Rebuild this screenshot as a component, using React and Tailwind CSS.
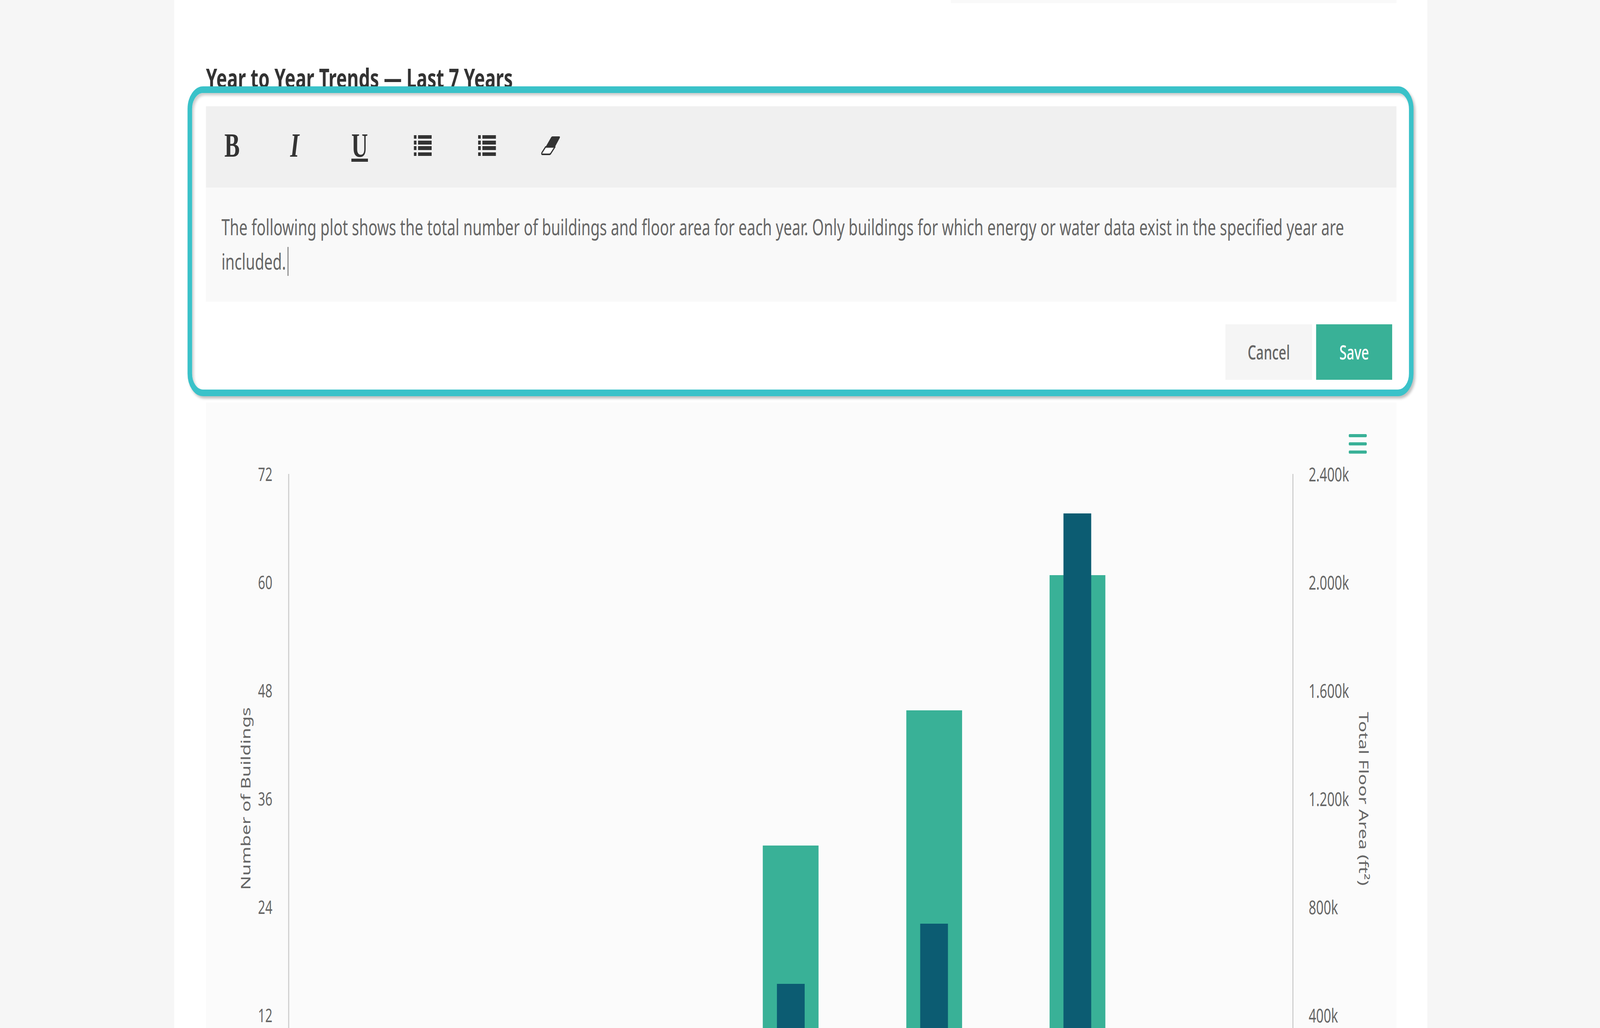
const leftTicks = ["72", "60", "48", "36", "24", "12"];
const rightTicks = ["2.400k", "2.000k", "1.600k", "1.200k", "800k", "400k"];

function ListIcon() {
  return (
    <svg width="67" height="53" viewBox="0 0 67 53" fill="#333333">
      <rect x="0" y="0" width="10" height="9" />
      <rect x="16" y="0" width="51" height="9" />
      <rect x="0" y="14" width="10" height="10" />
      <rect x="16" y="14" width="51" height="10" />
      <rect x="0" y="28" width="10" height="10" />
      <rect x="16" y="28" width="51" height="10" />
      <rect x="0" y="44" width="10" height="9" />
      <rect x="16" y="44" width="51" height="9" />
    </svg>
  );
}

function EraserIcon() {
  return (
    <svg width="72" height="49" viewBox="0 0 72 49">
      <path d="M17 28 L38 3 Q40 1 43 1 H68 Q72 1 70 5 L52 28 Z" fill="#333333" />
      <path
        d="M17 28 H52 L36 45 Q34 47 31 47 H5 Q1 47 3 43 Z"
        fill="#ffffff"
        stroke="#333333"
        strokeWidth="4"
        strokeLinejoin="round"
      />
    </svg>
  );
}

function HamburgerIcon() {
  return (
    <svg width="68" height="50" viewBox="0 0 68 50" fill="#39b197">
      <rect x="0" y="0" width="68" height="8" rx="4" />
      <rect x="0" y="21" width="68" height="8" rx="4" />
      <rect x="0" y="42" width="68" height="8" rx="4" />
    </svg>
  );
}

function BarGroup({ green, dark }) {
  return (
    <div className="grid items-end justify-center">
      <div className="w-[209px] justify-self-center bg-[#39b197] [grid-area:1/1]" style={{ height: green }}></div>
      <div className="w-[104px] justify-self-center bg-[#0c5c72] [grid-area:1/1]" style={{ height: dark }}></div>
    </div>
  );
}

function App() {
  // the window can come up narrower than the 5997 design width
  const fit = window.innerWidth / 5997;

  return (
    <div className="h-[2631px] overflow-hidden bg-[#f6f6f6]">
      <div
        className="h-[2631px] w-[5997px] origin-top-left pl-[653px] font-['Noto_Sans',sans-serif]"
        style={{ transform: `scaleX(${fit})` }}
      >
        <div className="relative h-[2631px] w-[4697px] overflow-hidden bg-white pl-[119px] pr-[116px]">
          <div className="ml-auto h-[8px] w-[1670px] bg-[#f9f9f9]"></div>

          <h2 className="mt-[146px] whitespace-nowrap text-[67.5px] leading-[90px] font-bold text-[#333333]">
            Year to Year Trends — Last 7 Years
          </h2>

          <div className="mt-[786px] h-[1601px] overflow-hidden bg-[#fbfbfb] pt-[81px]">
            <div className="flex justify-end pr-[111px]">
              <HamburgerIcon />
            </div>

            <div className="mt-[52px] flex h-[1662px]">
              <div className="flex w-[164px] items-center pl-[112px]">
                <span className="rotate-180 whitespace-nowrap text-[48px] text-[#666666] [writing-mode:vertical-rl]">
                  Number of Buildings
                </span>
              </div>
              <div className="-mt-[138px] w-[85px] shrink-0">
                {leftTicks.map((tick) => (
                  <div key={tick} className="flex h-[277px] items-center justify-end text-[47px] text-[#666666]">
                    {tick}
                  </div>
                ))}
              </div>
              <div className="ml-[59px] grid h-[1662px] w-[3768px] shrink-0 grid-cols-7 items-end border-x-4 border-[#cccccc]">
                <div></div>
                <div></div>
                <div></div>
                <BarGroup green={711} dark={357} />
                <BarGroup green={1057} dark={511} />
                <BarGroup green={1403} dark={1561} />
                <div></div>
              </div>
              <div className="-mt-[138px] w-[228px] shrink-0 pl-[57px]">
                {rightTicks.map((tick) => (
                  <div key={tick} className="flex h-[277px] items-center text-[49px] text-[#666666]">
                    {tick}
                  </div>
                ))}
              </div>
              <div className="flex items-center">
                <span className="whitespace-nowrap text-[48px] text-[#666666] [writing-mode:vertical-rl]">
                  Total Floor Area (ft²)
                </span>
              </div>
            </div>
          </div>

          <div className="absolute left-[50px] top-[221px] h-[793px] w-[4595px] rounded-[58px] border-[17px] border-[#3ac2c9] bg-white pl-[52px] pr-[47px] pt-[34px] shadow-[6px_6px_8px_rgba(0,0,0,0.25),inset_6px_6px_8px_rgba(0,0,0,0.2)]">
            <div className="flex h-[208px] items-center bg-[#f0f0f0] pb-[8px]">
              <span className="ml-[69px] w-[247px] font-['Liberation_Serif',serif] text-[86px] leading-none font-bold text-[#333333]">
                B
              </span>
              <span className="w-[229px] font-['Liberation_Serif',serif] text-[86px] leading-none font-bold italic text-[#333333]">
                I
              </span>
              <span className="w-[234px] font-['Liberation_Serif',serif] text-[86px] leading-none font-bold text-[#333333] underline">
                U
              </span>
              <span className="w-[241px]">
                <ListIcon />
              </span>
              <span className="w-[236px]">
                <ListIcon />
              </span>
              <EraserIcon />
            </div>

            <div className="h-[292px] bg-[#f9f9f9] px-[58px] pt-[56px] text-[56.3px] leading-[88px] text-[#666666]">
              <p>
                The following plot shows the total number of buildings and floor area for each year. Only buildings for which energy or water data exist in the specified year are
                <br />
                included.
                <span className="ml-[6px] inline-block h-[74px] w-[3px] bg-[#666666] align-[-16px]"></span>
              </p>
            </div>

            <div className="mt-[58px] flex justify-end gap-[15px] pr-[16px]">
              <button className="h-[142px] w-[325px] bg-[#f5f5f5] text-[50px] font-medium text-[#666666]">
                Cancel
              </button>
              <button className="h-[142px] w-[285px] bg-[#39b197] text-[50px] font-medium text-white">
                Save
              </button>
            </div>
          </div>
        </div>
      </div>
    </div>
  );
}

export default App;
